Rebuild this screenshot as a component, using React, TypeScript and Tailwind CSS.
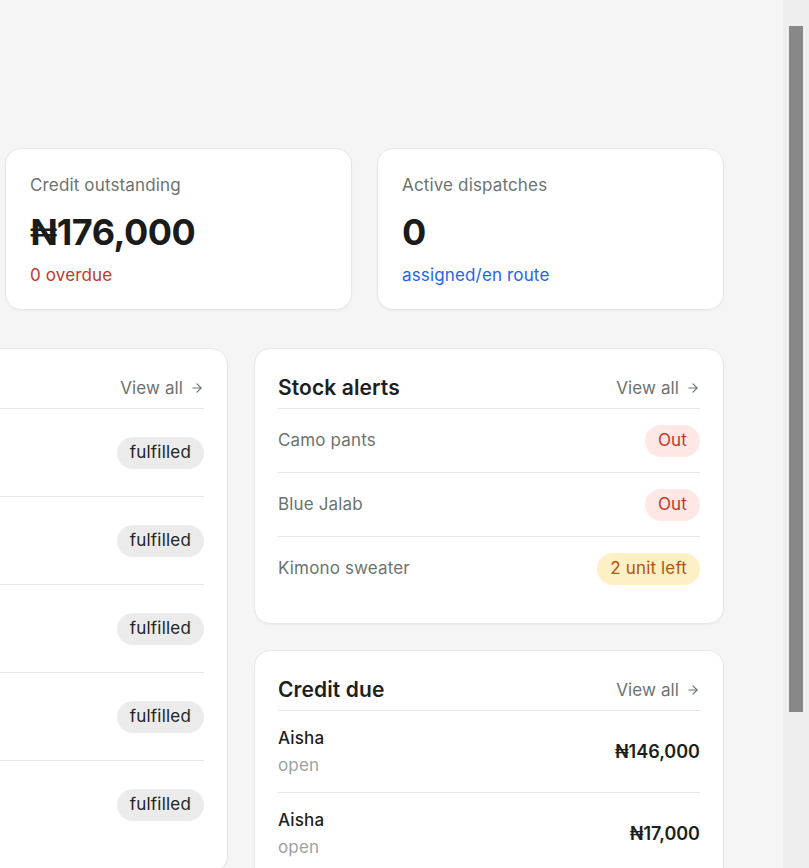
import React from "react";

const font = { fontFamily: 'Inter, "DejaVu Sans", sans-serif' };

function ViewAll() {
  return (
    <a className="flex items-center gap-[7px] text-[17px] leading-6 text-[#6b7370] tracking-[0.1px]">
      <span>View all</span>
      <svg width="14" height="14" viewBox="0 0 24 24" fill="none" stroke="currentColor" strokeWidth="2" strokeLinecap="round" strokeLinejoin="round">
        <path d="M5 12h14" />
        <path d="m12 5 7 7-7 7" />
      </svg>
    </a>
  );
}

function CardHeader({ title }: { title: string }) {
  return (
    <div className="flex items-center justify-between h-[32px] mb-1">
      <h2 className="text-[21px] font-semibold text-[#1c1f1e] leading-8 tracking-[0.1px]">{title}</h2>
      <ViewAll />
    </div>
  );
}

const cardCls = "bg-white rounded-2xl border border-[#e6e8e7] shadow-[0_1px_2px_rgba(0,0,0,0.04)]";

function StatCard({ label, value, sub, subCls }: { label: string; value: string; sub: string; subCls: string }) {
  return (
    <div className={`${cardCls} w-[347px] h-[162px] shrink-0 px-6 pt-[24px]`}>
      <div className="text-[17px] leading-6 text-[#6b7370] tracking-[0.15px]">{label}</div>
      <div className="mt-[13px] text-[36px] leading-[44px] font-bold text-[#1a1c1b] tracking-[-0.5px]">{value}</div>
      <div className={`mt-[9px] text-[17px] leading-6 tracking-[0.15px] ${subCls}`}>{sub}</div>
    </div>
  );
}

export default function App() {
  const orders = [
    { name: "Order #1042", who: "Aisha" },
    { name: "Order #1041", who: "Aisha" },
    { name: "Order #1040", who: "Aisha" },
    { name: "Order #1039", who: "Aisha" },
    { name: "Order #1038", who: "Aisha" },
  ];
  const stock = [
    { name: "Camo pants", badge: "Out", cls: "bg-[#fde8e6] text-[#c5362b]" },
    { name: "Blue Jalab", badge: "Out", cls: "bg-[#fde8e6] text-[#c5362b]" },
    { name: "Kimono sweater", badge: "2 unit left", cls: "bg-[#fdf0c4] text-[#b4530f]" },
  ];
  const credit = [
    { name: "Aisha", status: "open", amount: "₦146,000" },
    { name: "Aisha", status: "open", amount: "₦17,000" },
  ];
  return (
    <div style={font} className="flex w-[809px] h-[868px] overflow-hidden bg-[#f4f5f4]">
      <main className="flex-1 min-w-0 overflow-hidden pt-[148px]">
        <div className="flex justify-end gap-[25px] pr-[59px]">
          <StatCard label="Credit outstanding" value="₦176,000" sub="0 overdue" subCls="text-[#c5362b]" />
          <StatCard label="Active dispatches" value="0" sub="assigned/en route" subCls="text-[#2563eb]" />
        </div>
        <div className="flex justify-end items-start gap-[26px] pr-[59px] mt-[38px]">
          <section className={`${cardCls} w-[700px] shrink-0 px-[23px] pt-[23px] pb-[23px]`}>
            <CardHeader title="Recent orders" />
            {orders.map((o, i) => (
              <div key={i} className="flex items-center justify-between h-[88px] border-t border-[#e3e7e5]">
                <div>
                  <div className="text-[17px] leading-6 font-medium text-[#1c1f1e]">{o.name}</div>
                  <div className="text-[17px] leading-6 text-[#9aa39f]">{o.who}</div>
                </div>
                <span className="h-8 flex items-center px-[13px] rounded-full bg-[#ebebeb] text-[17px] tracking-[0.2px] text-[#1f2422]">fulfilled</span>
              </div>
            ))}
          </section>
          <div className="w-[470px] shrink-0 flex flex-col gap-[26px]">
            <section className={`${cardCls} px-[23px] pt-[23px] pb-[23px]`}>
              <CardHeader title="Stock alerts" />
              {stock.map((s, i) => (
                <div key={i} className="flex items-center justify-between h-[64px] border-t border-[#e3e7e5]">
                  <span className="text-[17px] text-[#6b7370] tracking-[0.15px]">{s.name}</span>
                  <span className={`h-8 flex items-center px-[13px] rounded-full text-[17px] tracking-[0.15px] ${s.cls}`}>{s.badge}</span>
                </div>
              ))}
            </section>
            <section className={`${cardCls} px-[23px] pt-[23px] pb-[23px]`}>
              <CardHeader title="Credit due" />
              {credit.map((c, i) => (
                <div key={i} className="flex items-center justify-between h-[82px] border-t border-[#e3e7e5]">
                  <div>
                    <div className="text-[17px] leading-6 font-medium text-[#1c1f1e] tracking-[0.15px]">{c.name}</div>
                    <div className="mt-[3px] text-[17px] leading-6 text-[#9aa39f] tracking-[0.15px]">{c.status}</div>
                  </div>
                  <span className="text-[18px] font-semibold text-[#1c1f1e]">{c.amount}</span>
                </div>
              ))}
            </section>
          </div>
        </div>
      </main>
      <div className="w-[26px] shrink-0 bg-[#eeeeee] pt-[26px] pl-[6px]">
        <div className="w-[14px] h-[686px] bg-[#888888]" />
      </div>
    </div>
  );
}
